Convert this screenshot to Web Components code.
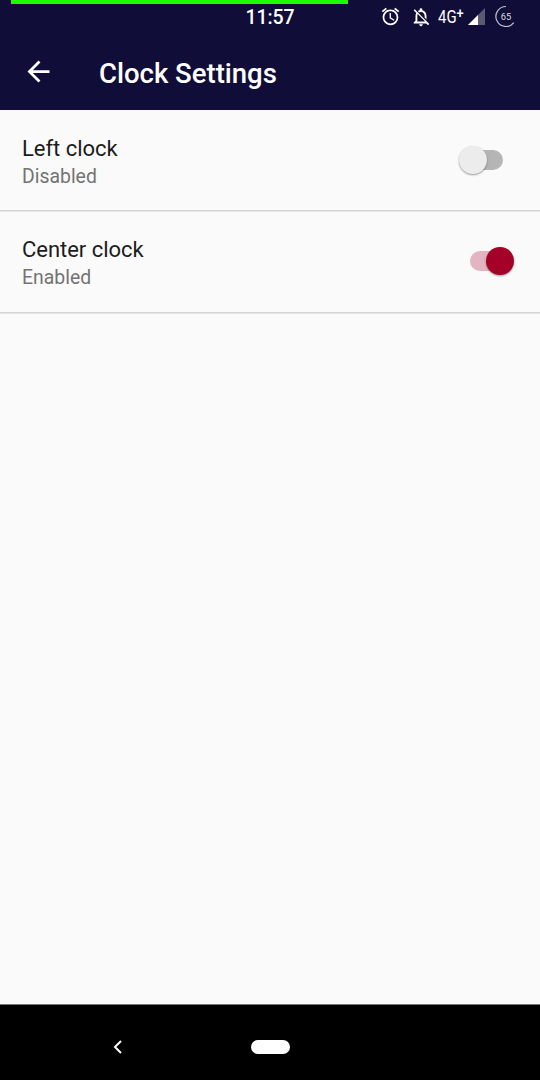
<!DOCTYPE html>
<html lang="en"><head><meta charset="utf-8"><title>Clock Settings</title>
<style>html,body{margin:0;height:1080px;overflow:hidden;background:#fafafa}</style></head>
<body><settings-screen></settings-screen>
<script>
const define=(name,html)=>customElements.define(name,class extends HTMLElement{
  constructor(){super();this.attachShadow({mode:'open'}).innerHTML=html;}
});
define('status-bar',`<style>
:host{display:grid;grid-template-columns:245.5px 1fr;grid-template-rows:4px 30px;height:34px;color:#fff}
.battery{grid-column:1/3;margin-left:11px;width:337px;background:#1dff00}
.time{grid-column:2;grid-row:2;font-size:19.5px;font-weight:500;line-height:27px;letter-spacing:-.1px}
.icons{grid-column:2;grid-row:2;justify-self:end;display:flex;align-items:flex-start;margin-right:23px}
svg{display:block;flex:none}
.net{font:400 18px/25px Roboto,sans-serif;width:29px;margin-left:6px;height:26px;white-space:nowrap}
.net span{display:inline-block;transform:scaleX(.83);transform-origin:0 50%}
.net sup{font-size:15.5px;font-weight:500;line-height:0;vertical-align:5px;letter-spacing:0}
</style>
<div class="battery"></div><div class="time">11:57</div>
<div class="icons">
<svg width="21" height="25" viewBox="0 -2.3 24 28.6" fill="#fff" style="margin-right:9px"><path d="M22 5.72l-4.6-3.86-1.29 1.53 4.6 3.86L22 5.72zM7.88 3.39L6.6 1.86 2 5.71l1.29 1.53 4.59-3.85zM12.5 8H11v6l4.75 2.85.75-1.23-4-2.37V8zM12 4c-4.97 0-9 4.03-9 9s4.02 9 9 9a9 9 0 0 0 0-18zm0 16c-3.87 0-7-3.13-7-7s3.13-7 7-7 7 3.13 7 7-3.13 7-7 7z"/></svg>
<svg width="22" height="26" viewBox="0 -2.2 24 28.4" fill="#fff"><path d="M20 18.69L7.84 6.14 5.27 3.49 4 4.76l2.8 2.8v.01c-.52.99-.8 2.16-.8 3.42v5l-2 2v1h13.73l2 2L21 19.72l-1-1.03zM12 22c1.11 0 2-.89 2-2h-4c0 1.11.89 2 2 2zM8 17v-6c0-.84.15-1.62.44-2.29L16 16.44V17H8z"/><path d="M18 14.68V11c0-3.08-1.64-5.64-4.5-6.32V4a1.5 1.5 0 0 0-3 0v.68c-.74.18-1.38.46-1.95.83L10 6.98c.6-.31 1.27-.48 2-.48 2.48 0 4 2.02 4 4.5v1.63z"/></svg>
<div class="net"><span>4G<sup>+</sup></span></div>
<svg width="18" height="26" viewBox="467 4 18 26"><path d="M485 8v17h-17z" fill="#5b5a74"/><path d="M478 15v10h-10z" fill="#fff"/></svg>
<svg width="24" height="28" viewBox="493 4 24 28" style="margin-left:8px"><path d="M506 6.5A10 10 0 1 0 513.8 22.7" fill="none" stroke="#c2c2cd" stroke-width="1.2"/><text x="506" y="20" text-anchor="middle" font-family="Roboto,sans-serif" font-size="9.3" fill="#ddd">65</text></svg>
</div>`);
define('app-bar',`<style>
:host{display:flex;align-items:flex-start;height:76px;color:#fff}
svg{margin:21px 44px 0 22px;flex:none}
.title{font-size:27.5px;font-weight:500;line-height:32px;margin-top:24px;white-space:nowrap}
</style><svg width="33" height="33" viewBox="0 0 24 24" fill="#fff"><path d="M20 11H7.83l5.59-5.59L12 4l-8 8 8 8 1.41-1.41L7.83 13H20v-2z"/></svg><div class="title"><slot></slot></div>`);
define('toggle-switch',`<style>
:host{display:flex;align-items:center;width:55px;height:28px;--track:#b5b5b5;--thumb:#ececec}
:host([checked]){--track:#e3b4c1;--thumb:#a50028}
.track{display:flex;align-items:center;width:33px;height:20px;border-radius:10px;background:var(--track);margin-left:11px}
.thumb{flex:none;width:28px;height:28px;border-radius:50%;background:var(--thumb);margin-left:-11px;box-shadow:0 1px 2px rgba(0,0,0,.4)}
:host([checked]) .thumb{margin-left:16px}
</style><div class="track"><div class="thumb"></div></div>`);
define('setting-row',`<style>
:host{display:flex;box-sizing:border-box;height:101px;border-bottom:1px solid #d4d4d4;box-shadow:0 1px #e4e4e4;padding:24px 26.5px 0 22px;justify-content:space-between}
:host(:last-of-type){height:102px}
.name{font-size:22px;line-height:29px;height:28px;color:#1c1c1c;letter-spacing:-.03px}
.state{font-size:19.4px;line-height:26px;color:#737373;margin-top:2px}
.control{margin-top:12px}
</style><div><div class="name"><slot name="name"></slot></div><div class="state"><slot></slot></div></div><div class="control"><slot name="control"></slot></div>`);
define('navigation-bar',`<style>
:host{display:flex;box-sizing:border-box;height:76px;background:#000;border-top:1px solid #777;align-items:center;padding:9px 0 0 111.5px}
.home{width:39px;height:14px;border-radius:7px;background:#fff;margin-left:127.5px}
</style><svg width="12" height="16" viewBox="0 0 12 16" fill="none" stroke="#fff" stroke-width="2"><path d="M9 2L3 8l6 6"/></svg><div class="home"></div>`);
define('settings-screen',`<style>
:host{display:flex;flex-direction:column;width:540px;height:1080px;background:#fafafa;font-family:Roboto,sans-serif}
header{background:#100e38}main{flex:1}
</style><header><status-bar></status-bar><app-bar>Clock Settings</app-bar></header>
<main><setting-row><span slot="name">Left clock</span>Disabled<toggle-switch slot="control"></toggle-switch></setting-row>
<setting-row><span slot="name">Center clock</span>Enabled<toggle-switch slot="control" checked></toggle-switch></setting-row></main>
<navigation-bar></navigation-bar>`);
</script></body></html>
